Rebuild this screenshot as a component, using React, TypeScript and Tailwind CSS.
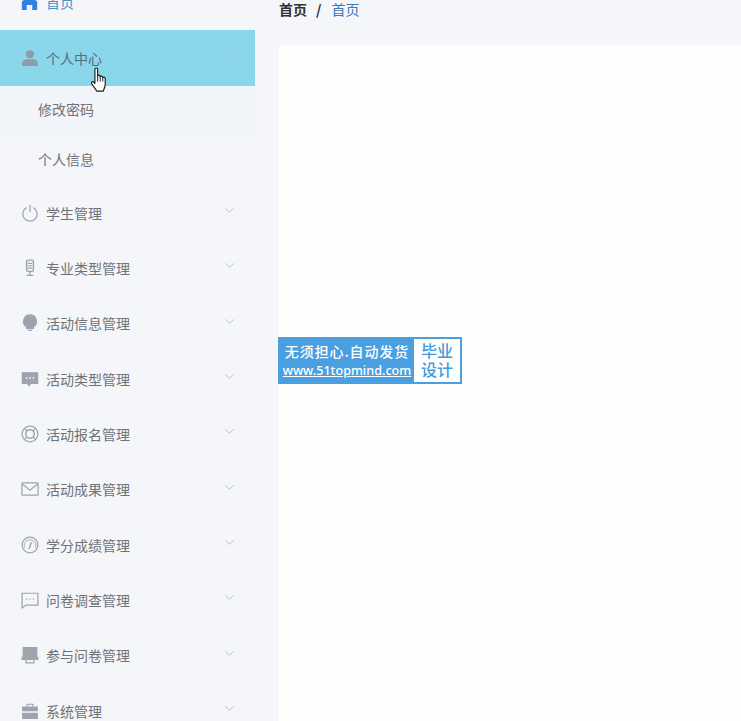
import type { ReactNode } from 'react'
import { ChevronDown, ChevronUp } from 'lucide-react'

const cjk = '[font-family:"Noto_Sans_CJK_SC","Liberation_Sans",sans-serif]'

function Glyph({ children }: { children: ReactNode }) {
  return (
    <svg viewBox="0 0 16 16" className="h-[18px] w-[18px] shrink-0 text-[#9ea3ae]" fill="none" stroke="currentColor" strokeWidth="1.1" aria-hidden="true">
      {children}
    </svg>
  )
}

const icons: Record<string, ReactNode> = {
  power: (
    <>
      <path d="M5 3.2a6.4 6.4 0 1 0 6 0" />
      <path d="M8 0.8v6.4" />
    </>
  ),
  mic: (
    <>
      <rect x="5" y="1" width="6" height="10" rx="1.2" strokeWidth="1.3" />
      <path d="M6.2 3.8h3.6M6.2 6h3.6M6.2 8.2h3.6M8 11v3M5 14.5h6" />
    </>
  ),
  bulb: (
    <>
      <path d="M8 .8a5.8 5.8 0 0 1 3 10.7v1.2H5v-1.2A5.8 5.8 0 0 1 8 .8z" fill="currentColor" />
      <path d="M6 14.5h4" />
    </>
  ),
  chat: (
    <>
      <path d="M1.2 2.5h13.6v9.5H8.6l-1.4 2-1.4-2H1.2z" fill="currentColor" />
      <path d="M4.4 7h1.2M7.4 7h1.2M10.4 7h1.2" stroke="#f4f6fa" strokeWidth="1.4" />
    </>
  ),
  ring: (
    <>
      <circle cx="8" cy="8" r="7" />
      <circle cx="8" cy="8" r="3.8" strokeWidth="1.3" />
      <path d="M3 3l2.5 2.5M13 3l-2.5 2.5M3 13l2.5-2.5M13 13l-2.5-2.5" />
    </>
  ),
  mail: (
    <>
      <rect x="0.8" y="2.5" width="14.4" height="11" rx="0.6" />
      <path d="M1.2 3.5L8 9l6.8-5.5" />
    </>
  ),
  gauge: (
    <>
      <circle cx="8" cy="8" r="7" />
      <path d="M3.2 10.5a5.2 5.2 0 1 1 9.6 0" strokeWidth="0.8" />
      <path d="M7.2 11.5L9.2 5.5" strokeWidth="1.3" />
    </>
  ),
  bubble: (
    <>
      <path d="M1 2h14v10.5H4.5L1 15z" />
      <path d="M4.5 7.2h1M7.5 7.2h1M10.5 7.2h1" strokeWidth="1.3" />
    </>
  ),
  printer: (
    <>
      <path d="M2 1.5h12v8H2z" fill="currentColor" />
      <path d="M1 10h14v2H1z" fill="currentColor" />
      <path d="M4.5 12h7v3h-7z" />
    </>
  ),
  case: (
    <>
      <path d="M5.5 4V2h5v2" />
      <path d="M1 4h14v4.3H1zM1 9.5h14V15H1z" fill="currentColor" stroke="none" />
    </>
  ),
}

const groups = [
  { name: '学生管理', icon: 'power' },
  { name: '专业类型管理', icon: 'mic' },
  { name: '活动信息管理', icon: 'bulb' },
  { name: '活动类型管理', icon: 'chat' },
  { name: '活动报名管理', icon: 'ring' },
  { name: '活动成果管理', icon: 'mail' },
  { name: '学分成绩管理', icon: 'gauge' },
  { name: '问卷调查管理', icon: 'bubble' },
  { name: '参与问卷管理', icon: 'printer' },
  { name: '系统管理', icon: 'case' },
]

function HandCursor() {
  return (
    <svg viewBox="0 0 18 24" className="absolute left-[90px] top-[37px] h-[25px] w-[19px]" aria-hidden="true">
      <path
        d="M4.6 2.2c0-1.6 2.6-1.6 2.6 0v6.6c0-1.3 2.4-1.3 2.4 0v.8c0-1.2 2.4-1.2 2.4 0v.9c0-1.1 2.5-1.1 2.5.2v5.8c0 2.6-1.5 5.2-1.9 6.6H6.2c-.7-2-3.2-4.4-4.6-7-.9-1.7.9-2.8 2-1.5l1 1.2z"
        fill="#fff"
        stroke="#1d1d1d"
        strokeWidth="1.1"
        strokeLinejoin="round"
      />
      <path d="M7.2 9v5M9.7 9.6v4.4M12.1 10.4V14" stroke="#1d1d1d" strokeWidth="0.9" fill="none" />
    </svg>
  )
}

export default function App() {
  return (
    <div className={`flex h-[721px] w-[741px] overflow-hidden bg-[#f4f6fa] text-sm ${cjk}`}>
      <aside className="w-[255px] shrink-0 text-[#6f7278]">
        <div className="mt-[-25.5px] flex h-[55.5px] items-center gap-[8px] pl-[21px] text-[#4a90c8]">
          <svg viewBox="0 0 16 16" className="h-[17px] w-[17px] shrink-0 text-[#2f80e0]" fill="currentColor" aria-hidden="true">
            <path d="M8 .8l7.2 6.4V15h-4.6v-4.6H5.4V15H.8V7.2z" />
          </svg>
          <span>首页</span>
        </div>

        <div className="relative flex h-[55.5px] items-center gap-[7px] bg-[#8ad6eb] pl-[21px] pr-5">
          <svg viewBox="0 0 16 16" className="h-[18px] w-[18px] shrink-0 text-[#8f9ca8]" fill="currentColor" aria-hidden="true">
            <circle cx="8" cy="4.6" r="3.6" />
            <path d="M1 15v-2.6c0-2.2 2-3.4 4-3.4h6c2 0 4 1.2 4 3.4V15z" />
          </svg>
          <span className="text-[#52707d]">个人中心</span>
          <ChevronUp className="absolute right-[18px] top-[20px] h-[15px] w-[15px] text-[#a8cfdb]" strokeWidth={1.2} />
          <HandCursor />
        </div>

        <div className="flex h-[50px] items-center bg-[#f1f4f8] pb-1 pl-[38px]">修改密码</div>
        <div className="flex h-[50px] items-center pb-1 pl-[38px]">个人信息</div>

        <div className="mt-[-0.5px]">
          {groups.map(group => (
            <div key={group.name} className="relative flex h-[55.35px] items-center gap-[7px] pl-[21px]">
              <Glyph>{icons[group.icon]}</Glyph>
              <span>{group.name}</span>
              <ChevronDown className="absolute right-[18px] top-[18px] h-[15px] w-[15px] text-[#a9adb5]" strokeWidth={1.2} />
            </div>
          ))}
        </div>
      </aside>

      <main className="flex-1 pl-6">
        <nav className="flex h-[45px] items-start gap-[9px] text-[14px] leading-[18px]">
          <span className="font-bold text-[#303133]">首页</span>
          <span className="font-bold text-[#303133]">/</span>
          <span className="ml-px text-[#3a78b8]">首页</span>
        </nav>
        <div className="relative h-[676px] bg-[#fefefd]">
          <div className="absolute left-[-1px] top-[292px] flex h-[47px] w-[184px] items-center border-2 border-[#4a9fe0] bg-[#4a9fe0]">
            <div className="flex w-[134px] flex-col items-center text-white">
              <span className="text-[14px] font-medium leading-[20px] tracking-[0.9px]">无须担心.自动发货</span>
              <span className="text-[12.6px] font-medium leading-[20px] underline [font-family:'Noto_Sans','Liberation_Sans',sans-serif]">www.51topmind.com</span>
            </div>
            <div className="flex h-full flex-1 items-center justify-center bg-white pb-[2px] text-center text-[16px] font-medium leading-[19px] text-[#3f9bdc]">
              毕业
              <br />
              设计
            </div>
          </div>
        </div>
      </main>
    </div>
  )
}
